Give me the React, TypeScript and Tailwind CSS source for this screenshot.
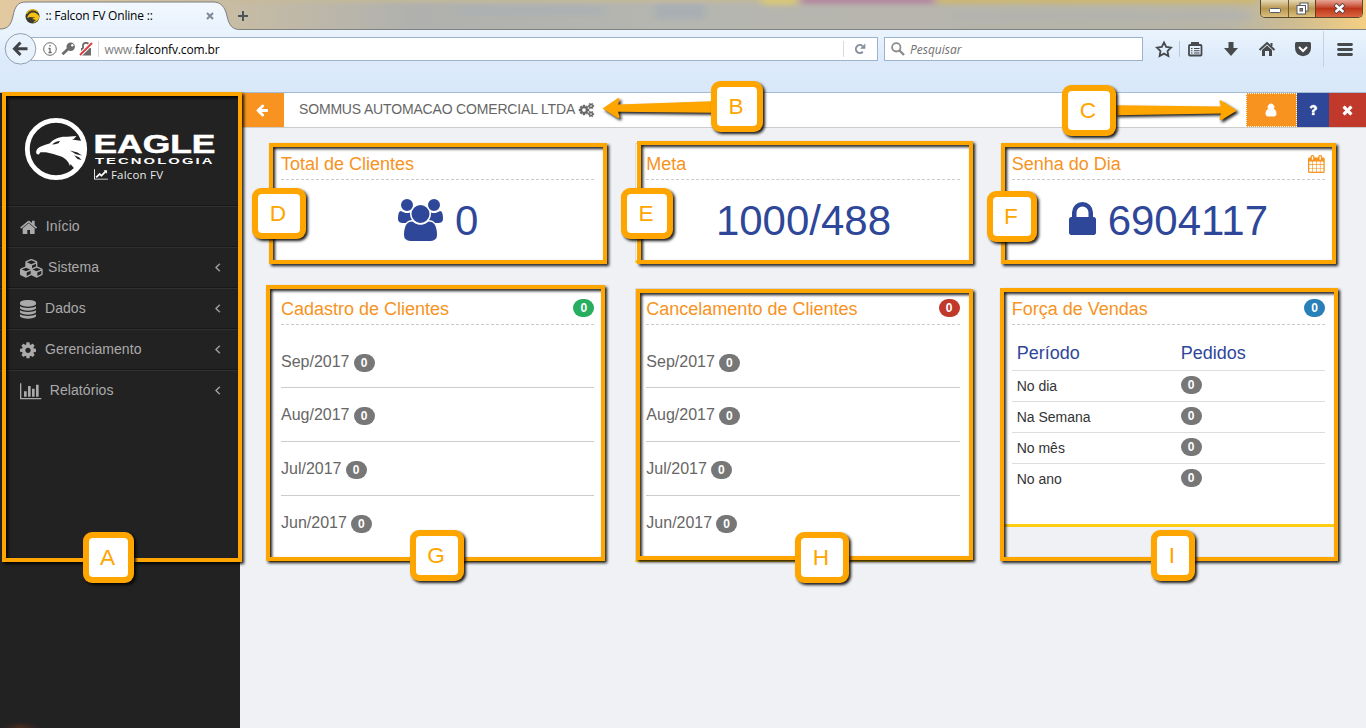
import React from 'react';

const glyphs = {
  home: { box: '64 0 1664 1792', w: 1664, d: 'M1472 992v480q0 26-19 45t-45 19h-384v-384h-256v384h-384q-26 0-45-19t-19-45v-480q0-1 .5-3t.5-3l575-474 575 474q1 2 1 6zm223-69l-62 74q-8 9-21 11h-3q-13 0-21-7l-692-577-692 577q-12 8-24 7-13-2-21-11l-62-74q-8-10-7-23.5t11-21.5l719-599q32-26 76-26t76 26l244 204v-195q0-14 9-23t23-9h192q14 0 23 9t9 23v408l219 182q10 8 11 21.5t-7 23.5z' },
  cubes: { box: '0 0 2304 1792', w: 2304, d: 'M640 1632l384-192v-314l-384 164v342zm-64-454l404-173-404-173-404 173zm1088 454l384-192v-314l-384 164v342zm-64-454l404-173-404-173-404 173zm-448-293l384-165v-266l-384 164v267zm-64-379l441-189-441-189-441 189zm1088 518v416q0 36-19 67t-52 47l-448 224q-25 14-57 14t-57-14l-448-224q-4-2-7-4-2 2-7 4l-448 224q-25 14-57 14t-57-14l-448-224q-33-16-52-47t-19-67v-416q0-38 21.5-70t56.5-48l434-186v-400q0-38 21.5-70t56.5-48l448-192q23-10 50-10t50 10l448 192q35 16 56.5 48t21.5 70v400l434 186q36 16 57 48t21 70z' },
  database: { box: '128 0 1536 1792', w: 1536, d: 'M896 768q237 0 443-43t325-127v170q0 69-103 128t-280 93.5-385 34.5-385-34.5-280-93.5-103-128v-170q119 84 325 127t443 43zm0 768q237 0 443-43t325-127v170q0 69-103 128t-280 93.5-385 34.5-385-34.5-280-93.5-103-128v-170q119 84 325 127t443 43zm0-384q237 0 443-43t325-127v170q0 69-103 128t-280 93.5-385 34.5-385-34.5-280-93.5-103-128v-170q119 84 325 127t443 43zm0-1152q208 0 385 34.5t280 93.5 103 128v128q0 69-103 128t-280 93.5-385 34.5-385-34.5-280-93.5-103-128v-128q0-69 103-128t280-93.5 385-34.5z' },
  cog: { box: '128 0 1536 1792', w: 1536, d: 'M1152 896q0-106-75-181t-181-75-181 75-75 181 75 181 181 75 181-75 75-181zm512-109v222q0 12-8 23t-20 13l-185 28q-19 54-39 91 35 50 107 138 10 12 10 25t-9 23q-27 37-99 108t-94 71q-12 0-26-9l-138-108q-44 23-91 38-16 136-29 186-7 28-36 28h-222q-14 0-24.5-8.5t-11.5-21.5l-28-184q-49-16-90-37l-141 107q-10 9-25 9-14 0-25-11-126-114-165-168-7-10-7-23 0-12 8-23 15-21 51-66.5t54-70.5q-27-50-41-99l-183-27q-13-2-21-12.5t-8-23.5v-222q0-12 8-23t19-13l186-28q14-46 39-92-40-57-107-138-10-12-10-24 0-10 9-23 26-36 98.5-107.5t94.5-71.5q13 0 26 10l138 107q44-23 91-38 16-136 29-186 7-28 36-28h222q14 0 24.5 8.5t11.5 21.5l28 184q49 16 90 37l142-107q9-9 24-9 13 0 25 10 129 119 165 170 7 8 7 22 0 12-8 23-15 21-51 66.5t-54 70.5q26 50 41 98l183 28q13 2 21 12.5t8 23.5z' },
  chart: { box: '0 0 2048 1792', w: 2048, d: 'M640 896v512h-256v-512h256zm384-512v1024h-256v-1024h256zm1024 1152v128h-2048v-1536h128v1408h1920zm-640-896v768h-256v-768h256zm384-384v1152h-256v-1152h256z' },
  line: { box: '0 0 2048 1792', w: 2048, d: 'M2048 1536v128h-2048v-1536h128v1408h1920zm-128-1248v435q0 21-19.5 29.5t-35.5-7.5l-121-121-633 633q-10 10-23 10t-23-10l-233-233-416 416-192-192 585-585q10-10 23-10t23 10l233 233 464-464-121-121q-16-16-7.5-35.5t29.5-19.5h435q14 0 23 9t9 23z' },
  angle: { box: '576 0 640 1792', w: 640, d: 'M1203 544q0 13-10 23l-393 393 393 393q10 10 10 23t-10 23l-50 50q-10 10-23 10t-23-10l-466-466q-10-10-10-23t10-23l466-466q10-10 23-10t23 10l50 50q10 10 10 23z' },
  users: { box: '0 0 1920 1792', w: 1920, d: 'M593 896q-162 5-265 128h-134q-82 0-138-40.5t-56-118.5q0-353 124-353 6 0 43.5 21t97.5 42.5 119 21.5q67 0 133-23-5 37-5 66 0 139 81 256zm1071 637q0 120-73 189.5t-194 69.5h-874q-121 0-194-69.5t-73-189.5q0-53 3.5-103.5t14-109 26.5-108.5 43-97.5 62-81 85.5-53.5 111.5-20q10 0 43 21.5t73 48 107 48 135 21.5 135-21.5 107-48 73-48 43-21.5q61 0 111.5 20t85.5 53.5 62 81 43 97.5 26.5 108.5 14 109 3.5 103.5zm-1024-1277q0 106-75 181t-181 75-181-75-75-181 75-181 181-75 181 75 75 181zm704 384q0 159-112.5 271.5t-271.5 112.5-271.5-112.5-112.5-271.5 112.5-271.5 271.5-112.5 271.5 112.5 112.5 271.5zm576 225q0 78-56 118.5t-138 40.5h-134q-103-123-265-128 81-117 81-256 0-29-5-66 66 23 133 23 59 0 119-21.5t97.5-42.5 43.5-21q124 0 124 353zm-128-609q0 106-75 181t-181 75-181-75-75-181 75-181 181-75 181 75 75 181z' },
  lock: { box: '320 0 1152 1792', w: 1152, d: 'M640 768h512v-192q0-106-75-181t-181-75-181 75-75 181v192zm832 96v576q0 40-28 68t-68 28h-960q-40 0-68-28t-28-68v-576q0-40 28-68t68-28h32v-192q0-184 132-316t316-132 316 132 132 316v192h32q40 0 68 28t28 68z' },
  user: { box: '256 0 1280 1792', w: 1280, d: 'M1536 1399q0 109-62.5 187t-150.5 78h-854q-88 0-150.5-78t-62.5-187q0-85 8.5-160.5t31.5-152 58.5-131 94-89 134.5-34.5q131 128 313 128t313-128q76 0 134.5 34.5t94 89 58.5 131 31.5 152 8.5 160.5zm-256-887q0 159-112.5 271.5t-271.5 112.5-271.5-112.5-112.5-271.5 112.5-271.5 271.5-112.5 271.5 112.5 112.5 271.5z' },
  question: { box: '384 0 1024 1792', w: 1024, d: 'M1088 1256v240q0 16-12 28t-28 12h-240q-16 0-28-12t-12-28v-240q0-16 12-28t28-12h240q16 0 28 12t12 28zm316-600q0 54-15.5 101t-35 76.5-55 59.5-57.5 43.5-61 35.5q-41 23-68.5 65t-27.5 67q0 17-12 32.5t-28 15.5h-240q-15 0-25.5-18.5t-10.5-37.5v-45q0-83 65-156.5t143-108.5q59-27 84-56t25-76q0-42-46.5-74t-107.5-32q-65 0-108 29-35 25-107 115-13 16-31 16-12 0-25-8l-164-125q-13-10-15.5-25t5.5-28q160-266 464-266 80 0 161 31t146 83 106 127.5 41 158.5z' },
  times: { box: '192 0 1408 1792', w: 1408, d: 'M1490 1322q0 40-28 68l-136 136q-28 28-68 28t-68-28l-294-294-294 294q-28 28-68 28t-68-28l-136-136q-28-28-28-68t28-68l294-294-294-294q-28-28-28-68t28-68l136-136q28-28 68-28t68 28l294 294 294-294q28-28 68-28t68 28l136 136q28 28 28 68t-28 68l-294 294 294 294q28 28 28 68z' },
  arrow: { box: '128 0 1536 1792', w: 1536, d: 'M1664 896v128q0 53-32.5 90.5t-84.5 37.5h-704l293 294q38 36 38 90t-38 90l-75 76q-37 37-90 37-52 0-91-37l-651-652q-37-37-37-90 0-52 37-91l651-650q38-38 91-38 52 0 90 38l75 74q38 38 38 91t-38 91l-293 293h704q52 0 84.5 37.5t32.5 90.5z' },
  calendar: { box: '64 0 1664 1792', w: 1664, d: 'M192 1664h288v-288h-288v288zm352 0h320v-288h-320v288zm-352-352h288v-320h-288v320zm352 0h320v-320h-320v320zm-352-384h288v-288h-288v288zm736 736h320v-288h-320v288zm-384-736h320v-288h-320v288zm768 736h288v-288h-288v288zm-384-352h320v-320h-320v320zm-352-864v-288q0-13-9.5-22.5t-22.5-9.5h-64q-13 0-22.5 9.5t-9.5 22.5v288q0 13 9.5 22.5t22.5 9.5h64q13 0 22.5-9.5t9.5-22.5zm736 864h288v-320h-288v320zm-384-384h320v-288h-320v288zm384 0h288v-288h-288v288zm32-480v-288q0-13-9.5-22.5t-22.5-9.5h-64q-13 0-22.5 9.5t-9.5 22.5v288q0 13 9.5 22.5t22.5 9.5h64q13 0 22.5-9.5t9.5-22.5zm384-64v1280q0 52-38 90t-90 38h-1408q-52 0-90-38t-38-90v-1280q0-52 38-90t90-38h128v-96q0-66 47-113t113-47h64q66 0 113 47t47 113v96h384v-96q0-66 47-113t113-47h64q66 0 113 47t47 113v96h128q52 0 90 38t38 90z' },
  cogs: { box: '0 0 1920 1792', w: 1920, d: 'M896 896q0-106-75-181t-181-75-181 75-75 181 75 181 181 75 181-75 75-181zm768 512q0-52-38-90t-90-38-90 38-38 90q0 53 37.5 90.5t90.5 37.5 90.5-37.5 37.5-90.5zm0-1024q0-52-38-90t-90-38-90 38-38 90q0 53 37.5 90.5t90.5 37.5 90.5-37.5 37.5-90.5zm-384 421v185q0 10-7 19.5t-16 10.5l-155 24q-11 35-32 76 34 48 90 115 7 11 7 20 0 12-7 19-23 30-82.5 89.5t-78.5 59.5q-11 0-21-7l-115-90q-37 19-77 31-11 108-23 155-7 24-30 24h-186q-11 0-20-7.5t-10-17.5l-23-153q-34-10-75-31l-118 89q-7 7-20 7-11 0-21-8-144-133-144-160 0-9 7-19 10-14 41-53t47-61q-23-44-35-82l-152-24q-10-1-17-9.5t-7-19.5v-185q0-10 7-19.5t16-10.5l155-24q11-35 32-76-34-48-90-115-7-11-7-20 0-12 7-20 22-30 82-89t79-59q11 0 21 7l115 90q34-18 77-32 11-108 23-154 7-24 30-24h186q11 0 20 7.5t10 17.5l23 153q34 10 75 31l118-89q8-7 20-7 11 0 21 8 144 133 144 160 0 8-7 19-12 16-42 54t-45 60q23 48 34 82l152 23q10 2 17 10.5t7 19.5zm640 533v140q0 16-149 31-12 27-30 52 51 113 51 138 0 4-4 7-122 71-124 71-8 0-46-47t-52-68q-20 2-30 2t-30-2q-14 21-52 68t-46 47q-2 0-124-71-4-3-4-7 0-25 51-138-18-25-30-52-149-15-149-31v-140q0-16 149-31 13-29 30-52-51-113-51-138 0-4 4-7 4-2 35-20t59-34 30-16q8 0 46 46.5t52 67.5q20-2 30-2t30 2q51-71 92-112l6-2q4 0 124 70 4 3 4 7 0 25-51 138 17 23 30 52 149 15 149 31zm0-1024v140q0 16-149 31-12 27-30 52 51 113 51 138 0 4-4 7-122 71-124 71-8 0-46-47t-52-68q-20 2-30 2t-30-2q-14 21-52 68t-46 47q-2 0-124-71-4-3-4-7 0-25 51-138-18-25-30-52-149-15-149-31v-140q0-16 149-31 13-29 30-52-51-113-51-138 0-4 4-7 4-2 35-20t59-34 30-16q8 0 46 46.5t52 67.5q20-2 30-2t30 2q51-71 92-112l6-2q4 0 124 70 4 3 4 7 0 25-51 138 17 23 30 52 149 15 149 31z' },
};

type GlyphName = keyof typeof glyphs;

function Glyph({ name, size, bold = 0, className = '' }: { name: GlyphName; size: number; bold?: number; className?: string }) {
  const g = glyphs[name];
  return (
    <svg className={`shrink-0 overflow-visible ${className}`} width={(size * g.w) / 1792} height={size} viewBox={g.box} fill="currentColor">
      <path d={g.d} stroke="currentColor" strokeWidth={bold} />
    </svg>
  );
}

function TitleBar() {
  return (
    <div className="relative flex h-[30px] justify-between overflow-hidden bg-[#b7b7b0]">
      <svg className="absolute inset-0" width="1366" height="30" viewBox="0 0 1366 30">
        <defs>
          <linearGradient id="strip" x1="0" x2="1" y1="0" y2="0">
            <stop offset="0" stopColor="#e3c9a0" />
            <stop offset="0.16" stopColor="#c9bda3" />
            <stop offset="0.22" stopColor="#bfb8a8" />
            <stop offset="0.3" stopColor="#b0b1ae" />
            <stop offset="0.5" stopColor="#b5b6b0" />
            <stop offset="0.66" stopColor="#b7b5ad" />
            <stop offset="0.75" stopColor="#b5b5ac" />
            <stop offset="0.9" stopColor="#b8b5a6" />
            <stop offset="0.95" stopColor="#d0bd90" />
            <stop offset="1" stopColor="#f4cf83" />
          </linearGradient>
          <filter id="soft" x="-20%" y="-80%" width="140%" height="260%"><feGaussianBlur stdDeviation="4 2.5" /></filter>
          <linearGradient id="tab" x1="0" x2="0" y1="0" y2="1">
            <stop offset="0" stopColor="#f2f8fe" />
            <stop offset="1" stopColor="#e8f2fc" />
          </linearGradient>
        </defs>
        <rect width="1366" height="30" fill="url(#strip)" />
        <g filter="url(#soft)">
          <rect x="230" y="-4" width="540" height="6" fill="#c6ba95" />
          <rect x="455" y="6" width="150" height="10" fill="#adb1b1" />
          <rect x="655" y="4" width="50" height="15" fill="#a8afb3" />
          <rect x="762" y="-5" width="36" height="10" fill="#d8c878" />
          <rect x="800" y="-5" width="135" height="9" fill="#b388a0" />
          <rect x="936" y="-5" width="320" height="9" fill="#ccb873" />
          <rect x="950" y="12" width="300" height="8" fill="#b3b4ae" />
        </g>
        <rect y="29" width="1366" height="1" fill="#81827f" />
        <path d="M0 30V29C8 29 11 25 13 16C15 6 18 2 26 2H213C221 2 225 7 227 16C229 25 232 29.5 240 29.5V30Z" fill="url(#tab)" />
        <path d="M0 29C8 29 11 25 13 16C15 6 18 2 26 2H213C221 2 225 7 227 16C229 25 232 29.5 240 29.5" fill="none" stroke="#7d7f7f" />
      </svg>
      <div className="relative flex items-center pl-[25px] pt-[2px]">
        <svg width="15" height="15" viewBox="0 0 15 15">
          <circle cx="7.5" cy="7.5" r="7" fill="#3b3a32" />
          <path d="M2 9C3 5 6 3 9 3.500C11 4 13 5 14.300 7.500C14 11 11 13.500 8 13.500L11 11L7 10L10 8.500L5 8Z" fill="#f5c211" />
          <path d="M1.500 5A7 7 0 0 1 13 3" fill="none" stroke="#e0b010" strokeWidth="1.200" />
        </svg>
        <span className="ml-[5.500px] w-[97.500px] whitespace-nowrap font-['Open_Sans','Noto_Sans',sans-serif] text-[12px] leading-none tracking-[-0.2px] text-black">:: Falcon FV Online ::</span>
        <svg className="ml-[63px]" width="8" height="8" viewBox="0 0 8 8"><path d="M1 1L7 7M7 1L1 7" stroke="#7b8996" strokeWidth="2" /></svg>
        <svg className="ml-[23px]" width="12" height="12" viewBox="0 0 12 12"><path d="M6 1V11M1 6H11" stroke="#4b535b" strokeWidth="2" /></svg>
      </div>
      <div className="relative mr-[3px] flex h-[18px] w-[103px] overflow-hidden rounded-b-[5px] border border-t-0 border-[#5d4a2c] text-white">
        <div className="flex w-[28px] items-center justify-center border-r border-[#6d5936] bg-linear-to-b from-[#e6d9b5] via-[#b8974f] to-[#dcc07d]">
          <svg width="12" height="5" viewBox="0 0 12 5" className="mt-[4px]"><rect x=".5" y=".5" width="11" height="4" rx="1" fill="white" stroke="#555a66" /></svg>
        </div>
        <div className="flex w-[27px] items-center justify-center border-r border-[#6d3920] bg-linear-to-b from-[#e6d9b5] via-[#b8974f] to-[#dcc07d]">
          <svg width="13" height="13" viewBox="0 0 13 13"><rect x="4" y="1" width="8" height="8" fill="white" stroke="#555a66" /><rect x="1" y="3.500" width="8.500" height="8.500" fill="white" stroke="#555a66" /><rect x="4" y="6.500" width="2.500" height="2.500" fill="#a58b55" stroke="#555a66" /></svg>
        </div>
        <div className="flex flex-1 items-center justify-center bg-linear-to-b from-[#e7a597] via-[#bd3518] to-[#d9643f]">
          <svg width="13" height="11" viewBox="0 0 13 11"><path d="M2 1.500L11 9.500M11 1.500L2 9.500" stroke="#4f4048" strokeWidth="4.200" /><path d="M2.500 2L10.500 9M10.500 2L2.500 9" stroke="white" strokeWidth="2.400" /></svg>
        </div>
      </div>
    </div>
  );
}

function NavBar() {
  return (
    <div className="flex h-[63px] items-start border-b border-[#a5bcd6] bg-linear-to-b from-[#eaf4fd] via-[#dceafa] via-50% to-[#d9e8f8] font-['Open_Sans','Noto_Sans',sans-serif] text-[12px]">
      <svg className="relative z-10 ml-[4px] mt-[2px] shrink-0" width="33" height="33" viewBox="0 0 33 33">
        <circle cx="16.500" cy="16.800" r="15.300" fill="#e8f2fc" stroke="#8f9fb1" />
        <path d="M16.500 10.500L10.500 16.800L16.500 23M11 16.800H23.500" fill="none" stroke="#404448" strokeWidth="3" />
      </svg>
      <div className="-ml-[6px] mt-[7px] flex h-[24px] w-[847px] items-center border border-[#9db3cd] bg-white">
        <svg className="ml-[11px] shrink-0" width="50" height="14" viewBox="0 0 50 14">
          <circle cx="7" cy="7" r="6.300" fill="none" stroke="#6c6c6c" />
          <path d="M7 6V10.500M5.500 6.500H7M5.500 10.500H8.700M7 3V4.600" stroke="#6c6c6c" strokeWidth="1.300" />
          <circle cx="27.700" cy="4.800" r="4.200" fill="#6c6c6c" /><circle cx="29.300" cy="3.300" r="1.200" fill="white" />
          <path d="M25.500 6.500L19.500 12.300" stroke="#6c6c6c" strokeWidth="2.800" />
          <rect x="38" y="6" width="10" height="7.500" fill="#6c6c6c" /><path d="M40 7V3.800a3 3 0 0 1 6 0V7" fill="none" stroke="#6c6c6c" strokeWidth="1.800" />
          <path d="M37 13L49 1" stroke="white" strokeWidth="4" /><path d="M37 13L49 1" stroke="#d9383d" strokeWidth="1.800" />
        </svg>
        <div className="ml-[5px] h-[16px] w-px bg-[#d8d8d8]" />
        <span className="ml-[5.500px] mt-[2px] whitespace-nowrap leading-none tracking-[-0.15px] text-[#808080]">www.<span className="text-black">falconfv.com.br</span></span>
        <div className="ml-auto h-[16px] w-px bg-[#d5dbe2]" />
        <svg className="ml-[10px] mr-[11px]" width="12" height="12" viewBox="0 0 12 12"><path d="M8.800 8.800A4 4 0 1 1 8.500 3" fill="none" stroke="#84909d" strokeWidth="2" /><path d="M11.300 .5V5.800H6Z" fill="#84909d" /></svg>
      </div>
      <div className="ml-[6px] mt-[7px] flex h-[24px] w-[259px] items-center border border-[#9db3cd] bg-white pl-[6px]">
        <svg width="14" height="14" viewBox="0 0 14 14"><circle cx="5.300" cy="5.300" r="4.200" fill="none" stroke="#8b8b8b" strokeWidth="1.800" /><path d="M8.500 8.500L13 13" stroke="#8b8b8b" strokeWidth="2.400" /></svg>
        <span className="ml-[5px] mt-[2px] leading-none italic tracking-[0] text-[#6f6f6f]">Pesquisar</span>
      </div>
      <svg className="shrink-0" width="223" height="62" viewBox="1143 30 223 62" fill="none" stroke="#474a4d">
        <path d="M1164 42.500L1166.200 47L1171 47.700L1167.500 51L1168.400 56L1164 53.600L1159.600 56L1160.500 51L1157 47.700L1161.800 47Z" strokeWidth="1.800" />
        <path d="M1179.500 41V57" stroke="#b8c8da" />
        <rect x="1189" y="45" width="12.500" height="10.500" rx="1" strokeWidth="1.800" /><path d="M1192 44.500V43H1198V44.500" strokeWidth="2" />
        <path d="M1191 48.500H1192.500M1194 48.500H1199.500M1191 50.700H1192.500M1194 50.700H1199.500M1191 53H1192.500M1194 53H1199.500" strokeWidth="1.100" />
        <path d="M1228.500 42H1233.500V48H1238L1231 56L1224 48H1228.500Z" fill="#474a4d" stroke="none" />
        <path d="M1259.500 50L1267 43L1274.500 50" strokeWidth="2" /><path d="M1262 50L1267 45.500L1272 50V56H1269V51H1265V56H1262Z" fill="#474a4d" stroke="none" /><path d="M1271.500 43V46" strokeWidth="2" />
        <path d="M1296.500 42H1309.500Q1311 42 1311 43.500V48Q1311 55 1303 56.300Q1295 55 1295 48V43.500Q1295 42 1296.500 42Z" fill="#474a4d" stroke="none" /><path d="M1299 47L1303 51L1307 47" stroke="white" strokeWidth="2" />
        <path d="M1323.500 31V67" stroke="#c3d1e0" />
        <path d="M1338.500 44.500H1351.500M1338.500 49.500H1351.500M1338.500 54.500H1351.500" strokeWidth="2.800" strokeLinecap="round" />
      </svg>
    </div>
  );
}

function Logo() {
  return (
    <svg width="240" height="112" viewBox="0 93 240 112" fill="white">
      <circle cx="56" cy="149" r="28.700" fill="none" stroke="white" strokeWidth="4.800" />
      <path d="M36.300 153.500C35.300 148.500 40 146 49.500 143.500C54 138.500 60 136.300 67 136.800L76.500 136L74 138.800L72 139.600L82 141L85 149L84 157L80 165L74.500 168.800L70.500 164L70 166.300C68.500 161 64.500 157 58 155.500C51 152.500 44 152 40.500 152.200L38.500 154.800Z" />
      <path d="M52 144.500C54.500 142.300 57 141.300 60 141L58.500 143.300L55 144.300ZM70 150.500L77.500 152.500L82 155.500L76 154.200ZM74 155.300L79 157.300L81.500 160L77.500 159Z" fill="#222" />
      <text x="93.500" y="153" fontSize="26.500" fontWeight="700" textLength="122" lengthAdjust="spacingAndGlyphs" stroke="white" strokeWidth=".5" fontFamily="Liberation Sans, Arial, sans-serif">EAGLE</text>
      <text x="95" y="163.700" fontSize="9.300" fontWeight="700" textLength="119.500" lengthAdjust="spacingAndGlyphs" letterSpacing="1.300" fontFamily="Liberation Sans, Arial, sans-serif">TECNOLOGIA</text>
      <g transform="translate(94 168.500) scale(.0068 .0066)"><path d={glyphs.line.d} /></g>
      <text x="111" y="179.300" fontSize="11.500" textLength="52" fillOpacity=".92" fontFamily="Open Sans, Noto Sans, sans-serif">Falcon FV</text>
    </svg>
  );
}

const menu: { icon: GlyphName; label: string; gap: string; sub: boolean }[] = [
  { icon: 'home', label: 'Início', gap: 'ml-[8.500px]', sub: false },
  { icon: 'cubes', label: 'Sistema', gap: 'ml-[4px]', sub: true },
  { icon: 'database', label: 'Dados', gap: 'ml-[9px]', sub: true },
  { icon: 'cog', label: 'Gerenciamento', gap: 'ml-[9px]', sub: true },
  { icon: 'chart', label: 'Relatórios', gap: 'ml-[8.500px]', sub: true },
];

function Sidebar() {
  return (
    <aside className="w-[240px] shrink-0 bg-[#222] text-[14px] text-[#aaa]">
      <Logo />
      <nav>
        {menu.map((m) => (
          <div key={m.label} className="flex h-[41px] items-center border-t border-[#181818] pl-5 shadow-[inset_0_1px_0_#303030]">
            <Glyph name={m.icon} size={18.67} className="mt-[2px]" />
            <span className={`tracking-[0.06px] ${m.gap}`}>{m.label}</span>
            {m.sub && <Glyph name="angle" size={14} bold={50} className="ml-auto mr-[20px]" />}
          </div>
        ))}
      </nav>
      <div className="h-[318px] bg-[radial-gradient(ellipse_18px_6px_at_21px_100%,#4a2c1f,#222222)]" />
    </aside>
  );
}

function Header() {
  return (
    <header className="flex h-[35px] border-b border-[#ccc] bg-white">
      <div className="flex w-[44px] items-center justify-center bg-[#f7931e] text-white"><Glyph name="arrow" size={14} /></div>
      <div className="ml-[15px] flex items-center text-[14px] text-[#666]">
        <span className="pb-px tracking-[-0.17px]">SOMMUS AUTOMACAO COMERCIAL LTDA</span>
        <Glyph name="cogs" size={14} bold={60} className="ml-[4px]" />
      </div>
      <div className="ml-auto flex text-white">
        <div className="flex w-[51px] items-center justify-center border border-dotted border-white bg-[#f7931e]"><Glyph name="user" size={14} bold={120} className="-ml-px" /></div>
        <div className="flex w-[32px] items-center justify-center bg-[#2e4799]"><Glyph name="question" size={14} bold={40} /></div>
        <div className="flex w-[37px] items-center justify-center bg-[#c0392b]"><Glyph name="times" size={14} bold={40} /></div>
      </div>
    </header>
  );
}

function Badge({ color = 'bg-[#777]' }: { color?: string }) {
  return <span className={`flex h-[18px] w-[21px] items-center justify-center rounded-[10px] text-[12px] leading-none font-bold text-white ${color}`}>0</span>;
}

function Card({ title, extra, className, children }: { title: string; extra?: React.ReactNode; className: string; children: React.ReactNode }) {
  return (
    <section className={`border border-b-[3px] border-[#ddd] border-b-[#ffcc11] bg-white px-[10px] ${className}`}>
      <div className="flex h-[36px] items-center justify-between border-b border-dashed border-[#ccc] pt-[4px] text-[18px] text-[#f7931e]">
        <h2 className="pt-[2px]">{title}</h2>
        {extra}
      </div>
      {children}
    </section>
  );
}

function Big({ children }: { children: React.ReactNode }) {
  return <div className="flex h-[80px] items-center justify-center pl-px text-[42px] leading-none text-[#2e4799]">{children}</div>;
}

function Months() {
  return (
    <div className="pt-[9px] text-[16px] text-[#666]">
      {['Sep', 'Aug', 'Jul', 'Jun'].map((m) => (
        <div key={m} className="flex h-[54px] items-center border-b border-[#ccc] first:pt-[2px] last:border-b-0 last:pb-px">
          <span>{m}/2017</span>
          <div className="ml-[4px] mt-[3px]"><Badge /></div>
        </div>
      ))}
    </div>
  );
}

function Sales() {
  return (
    <div className="pt-[11px] text-[14px] text-[#333]">
      <div className="flex h-[35px] items-center border-b border-[#ddd] pl-[5px] text-[18px] text-[#2e4799]">
        <span className="w-[164px]">Período</span><span>Pedidos</span>
      </div>
      {['No dia', 'Na Semana', 'No mês', 'No ano'].map((r) => (
        <div key={r} className="flex h-[31px] items-center border-b border-[#ddd] pl-[5px] last:border-b-0 last:pb-px">
          <span className="w-[164px]">{r}</span><div className="mb-[2px]"><Badge /></div>
        </div>
      ))}
    </div>
  );
}

const frames = [
  'left-[2px] top-[92px] w-[240px] h-[470px]',
  'left-[269px] top-[143px] w-[338px] h-[121px]',
  'left-[637px] top-[141px] w-[336px] h-[123px]',
  'left-[1001px] top-[143px] w-[335px] h-[121px]',
  'left-[266px] top-[285px] w-[339px] h-[276px]',
  'left-[636px] top-[289px] w-[337px] h-[271px]',
  'left-[1000px] top-[288px] w-[338px] h-[273px]',
];

const tags: [string, string][] = [
  ['A', 'left-[83px] top-[532px] w-[51px]'],
  ['B', 'left-[711px] top-[81px] w-[52px]'],
  ['C', 'left-[1062px] top-[85px] w-[54px]'],
  ['D', 'left-[252px] top-[188px] w-[54px]'],
  ['E', 'left-[621px] top-[188px] w-[52px]'],
  ['F', 'left-[987px] top-[191px] w-[50px]'],
  ['G', 'left-[410px] top-[530px] w-[54px]'],
  ['H', 'left-[795px] top-[532px] w-[54px]'],
  ['I', 'left-[1151px] top-[530px] w-[44px]'],
];

function Callouts() {
  return (
    <div className="pointer-events-none absolute inset-0">
      {frames.map((f) => (
        <div key={f} className={`absolute border-4 border-[#ffa500] [filter:drop-shadow(2px_2px_1.5px_rgba(0,0,0,0.9))] ${f}`} />
      ))}
      <svg className="absolute inset-0 [filter:drop-shadow(2px_2px_1.5px_rgba(0,0,0,0.9))]" width="1366" height="728" fill="#ffa500">
        <path d="M602.500 108.500L618 98Q620 98 619.500 100L618 104.500L712 101.300V112.700L618 111.700L619.500 116.500Q620 119 617.500 118Z" />
        <path d="M1237 110.500L1221 100.500Q1219 99.500 1219.500 102L1221 106.600L1115 105.300V115.300L1221 113.600L1219.500 118Q1219 121 1221.500 120Z" />
      </svg>
      {tags.map(([t, pos]) => (
        <div key={t} className={`absolute h-[51px] rounded-[9px] bg-[#ffa500] p-[6px] shadow-[2px_2px_3px_rgba(0,0,0,0.9)] ${pos}`}>
          <div className="flex h-full items-center justify-center rounded-[4px] bg-white pr-[2px] text-[22.67px] leading-none text-[#ffa500]">{t}</div>
        </div>
      ))}
    </div>
  );
}

export default function App() {
  return (
    <div className="relative flex h-[728px] w-[1366px] flex-col overflow-hidden bg-[#eff1f4] font-['Liberation_Sans',Arial,sans-serif]">
      <TitleBar />
      <NavBar />
      <div className="flex min-h-0 flex-1">
        <Sidebar />
        <div className="min-w-0 flex-1">
          <Header />
          <main className="grid grid-cols-3 items-start gap-x-[30px] gap-y-[25px] px-[30px] pt-[15px]">
            <Card title="Total de Clientes" className="h-[120px]">
              <Big><Glyph name="users" size={42} className="mr-[12px]" /><span className="pt-[2px]">0</span></Big>
            </Card>
            <Card title="Meta" className="h-[120px]"><Big><span className="pt-[2px]">1000/488</span></Big></Card>
            <Card title="Senha do Dia" className="h-[120px]" extra={<Glyph name="calendar" size={18} />}>
              <Big><Glyph name="lock" size={42} className="-ml-px mr-[12px]" /><span className="pt-[2px]">6904117</span></Big>
            </Card>
            <Card title="Cadastro de Clientes" className="h-[274px]" extra={<div className="-mt-px mb-px"><Badge color="bg-[#27ae60]" /></div>}><Months /></Card>
            <Card title="Cancelamento de Clientes" className="h-[274px]" extra={<div className="-mt-px mb-px"><Badge color="bg-[#c0392b]" /></div>}><Months /></Card>
            <Card title="Força de Vendas" className="h-[239px]" extra={<div className="-mt-px mb-px"><Badge color="bg-[#2980b9]" /></div>}><Sales /></Card>
          </main>
        </div>
      </div>
      <Callouts />
    </div>
  );
}
